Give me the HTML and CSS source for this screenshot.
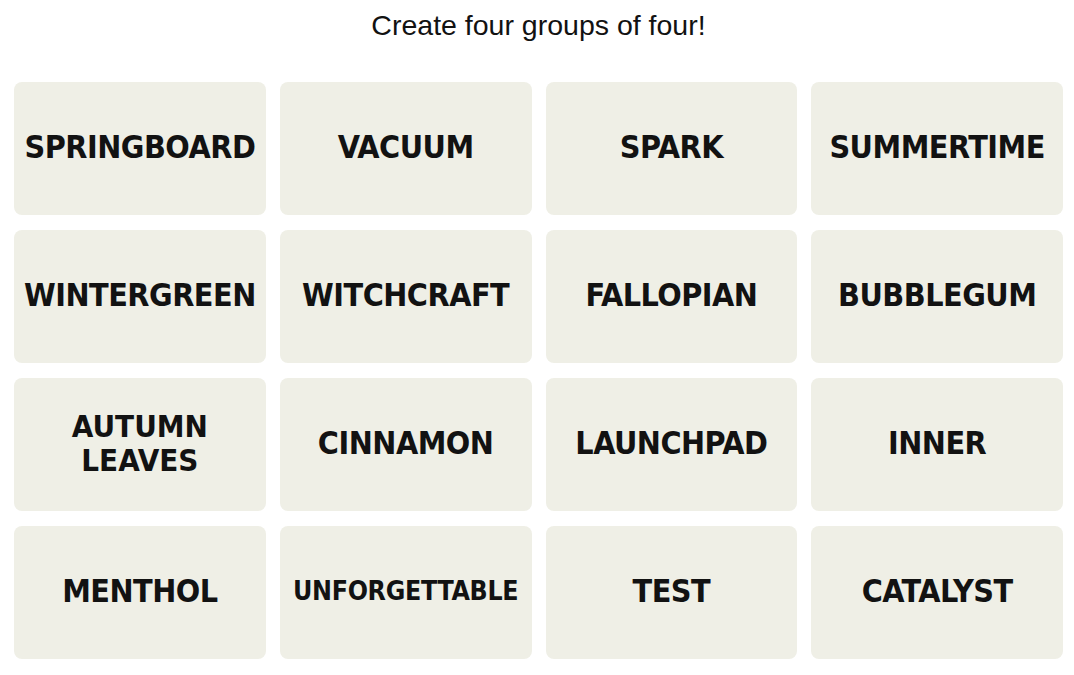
FILE: index.html
```html
<!DOCTYPE html>
<html lang="en">
<head>
    <meta charset="UTF-8">
    <meta name="viewport" content="width=device-width, initial-scale=1.0">
    <title>Connections</title>
    <link rel="stylesheet" href="styles.css">
</head>
<body>

    <div class="board">
        <p class="intro">Create four groups of four!</p>

        <!-- Grille des mots -->
        <div class="grid">
            <div class="tile">SPRINGBOARD</div>
            <div class="tile">VACUUM</div>
            <div class="tile">SPARK</div>
            <div class="tile">SUMMERTIME</div>

            <div class="tile">WINTERGREEN</div>
            <div class="tile">WITCHCRAFT</div>
            <div class="tile">FALLOPIAN</div>
            <div class="tile">BUBBLEGUM</div>

            <div class="tile tile-two-lines">AUTUMN<br>LEAVES</div>
            <div class="tile">CINNAMON</div>
            <div class="tile">LAUNCHPAD</div>
            <div class="tile">INNER</div>

            <div class="tile">MENTHOL</div>
            <div class="tile tile-long">UNFORGETTABLE</div>
            <div class="tile">TEST</div>
            <div class="tile">CATALYST</div>
        </div>
    </div>

</body>
</html>
```

FILE: styles.css
```css
body {
    font-family: "Liberation Sans", Arial, sans-serif;
    background-color: #ffffff;
    color: #121212;
    margin: 0;
    padding: 0;
}
.board {
    width: 1049px;
    margin-left: 14px;
}
.intro {
    margin: 0;
    padding-top: 8px;
    height: 82px;
    box-sizing: border-box;
    text-align: center;
    font-size: 28.5px;
    line-height: 34px;
}
.grid {
    display: grid;
    grid-template-columns: repeat(4, minmax(0, 1fr));
    grid-auto-rows: 133px;
    column-gap: 14px;
    row-gap: 15px;
}
.tile {
    display: flex;
    align-items: center;
    justify-content: center;
    padding-bottom: 4px;
    box-sizing: border-box;
    text-align: center;
    background-color: #efefe6;
    border-radius: 8px;
    font-family: "DejaVu Sans Condensed", "Liberation Sans", sans-serif;
    font-weight: bold;
    font-size: 32px;
    letter-spacing: -0.5px;
    line-height: 34px;
}
.tile-two-lines {
    font-size: 31px;
    letter-spacing: 0;
}
.tile-long {
    font-size: 26.5px;
    letter-spacing: -0.3px;
}
```
